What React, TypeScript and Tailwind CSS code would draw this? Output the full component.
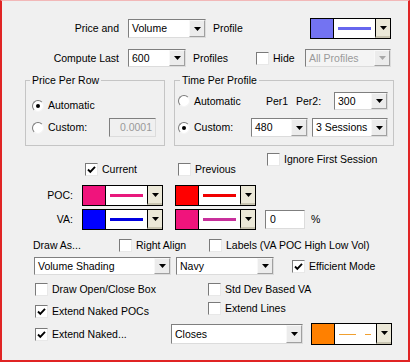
import React from 'react';
import clsx from 'clsx';

const Tri = ({ color = '#000' }: { color?: string }) => (
  <svg width="7" height="4" viewBox="0 0 7 4">
    <path d="M0 0h7L3.5 4z" fill={color} />
  </svg>
);

function Select({ value, className, disabled }: { value: string; className?: string; disabled?: boolean }) {
  return (
    <div
      className={clsx(
        'flex items-stretch border border-t-[#7f7f7f] border-l-[#7f7f7f] border-b-[#dcdcdc] border-r-[#dcdcdc]',
        disabled ? 'bg-[#f4f4f4] text-[#9a9a9a]' : 'bg-white',
        className
      )}
    >
      <span className="flex-1 flex items-center pl-[3px] whitespace-nowrap overflow-hidden">{value}</span>
      <span className="w-[16px] flex items-center justify-center bg-[#ececec] border border-[#f8f8f8] border-b-[#a0a0a0] border-r-[#a0a0a0]">
        <Tri color={disabled ? '#a8a8a8' : '#000'} />
      </span>
    </div>
  );
}

function ColorLine({ swatch, line, dashed, className }: { swatch: string; line: string; dashed?: boolean; className?: string }) {
  return (
    <div className={clsx('flex h-[21px] w-[81px] border border-black bg-white', className)}>
      <div className="w-[22px]" style={{ background: swatch }} />
      <div className="flex-1 flex items-center justify-center border-l border-black px-[4px]">
        {dashed ? (
          <div className="flex w-full gap-[9px]">
            <div className="h-[1px] w-[17px]" style={{ background: line }} />
            <div className="h-[1px] w-[6px]" style={{ background: line }} />
          </div>
        ) : (
          <div className="h-[3px] w-full" style={{ background: line }} />
        )}
      </div>
      <div className="w-[15px] flex items-center justify-center border-l border-black bg-[#ebe8d8] border-b-2 border-b-[#c9c5b2]">
        <Tri />
      </div>
    </div>
  );
}

function Check({ checked, label, className }: { checked?: boolean; label: string; className?: string }) {
  return (
    <div className={clsx('flex items-center gap-[4px] h-[13px]', className)}>
      <span className="w-[13px] h-[13px] shrink-0 bg-white border border-t-[#7a7a7a] border-l-[#7a7a7a] border-b-[#e8e8e8] border-r-[#e8e8e8] flex items-center justify-center">
        {checked && (
          <svg width="9" height="9" viewBox="0 0 9 9">
            <path d="M1 4.5l2.3 2.3L8 1.8" stroke="#000" strokeWidth="1.9" fill="none" />
          </svg>
        )}
      </span>
      <span className="whitespace-nowrap">{label}</span>
    </div>
  );
}

function Radio({ checked }: { checked?: boolean }) {
  return (
    <span className="w-[12px] h-[12px] shrink-0 rounded-full bg-white border border-t-[#7a7a7a] border-l-[#7a7a7a] border-b-[#f4f4f4] border-r-[#f4f4f4] flex items-center justify-center">
      {checked && <span className="w-[4px] h-[4px] rounded-full bg-black" />}
    </span>
  );
}

export default function App() {
  return (
    <div className="w-[412px] h-[364px] bg-white">
      <div className="w-[410px] h-[362px] bg-[#f0f0f0] border-t border-t-[#f2b8b8] border-x-2 border-b-2 border-[#e02424] text-[10.5px] text-black font-['Liberation_Sans',Arial,sans-serif] leading-none">
        {/* Price and Volume Profile */}
        <div className="flex items-center h-[21px] mt-[17px]">
          <span className="w-[117px] text-right">Price and</span>
          <Select value="Volume" className="ml-[9px] w-[78px] h-[19px]" />
          <span className="ml-[7px] w-[97px]">Profile</span>
          <ColorLine swatch="#7373f2" line="#6666ee" />
        </div>

        {/* Compute Last */}
        <div className="flex items-center h-[18px] mt-[10px]">
          <span className="w-[117px] text-right">Compute Last</span>
          <Select value="600" className="ml-[9px] w-[58px] h-[18px]" />
          <span className="ml-[7px] w-[63px]">Profiles</span>
          <Check label="" className="w-[13px]" />
          <span className="ml-[4px] w-[32px]">Hide</span>
          <Select value="All Profiles" disabled className="w-[86px] h-[18px]" />
        </div>

        {/* Groups */}
        <div className="flex mt-[7px]">
          <fieldset className="ml-[23px] w-[140px] h-[72px] border border-[#c5c5c5]">
            <legend className="ml-[4px] px-[2px] leading-[13px]">Price Per Row</legend>
            <div className="flex items-center h-[13px] mt-[12px] ml-[6px] gap-[4px]">
              <Radio checked />
              <span>Automatic</span>
            </div>
            <div className="flex items-center h-[19px] mt-[6px] ml-[6px]">
              <Radio />
              <span className="ml-[4px] w-[61px]">Custom:</span>
              <div className="w-[47px] h-[19px] flex items-center justify-end pr-[3px] text-[#9a9a9a] bg-[#f0f0f0] border border-t-[#7f7f7f] border-l-[#7f7f7f] border-b-[#dcdcdc] border-r-[#dcdcdc]">
                0.0001
              </div>
            </div>
          </fieldset>

          <fieldset className="ml-[9px] w-[220px] h-[72px] border border-[#c5c5c5]">
            <legend className="ml-[5px] px-[2px] leading-[13px]">Time Per Profile</legend>
            <div className="flex items-center h-[18px] mt-[5px] ml-[3px]">
              <Radio />
              <span className="ml-[4px] w-[72px]">Automatic</span>
              <span className="w-[30px]">Per1</span>
              <span className="w-[38px]">Per2:</span>
              <Select value="300" className="w-[54px] h-[18px]" />
            </div>
            <div className="flex items-center h-[19px] mt-[8px] ml-[3px]">
              <Radio checked />
              <span className="ml-[4px] w-[57px]">Custom:</span>
              <Select value="480" className="w-[57px] h-[19px]" />
              <Select value="3 Sessions" className="ml-[4px] w-[76px] h-[19px]" />
            </div>
          </fieldset>
        </div>

        {/* Current / Previous / Ignore */}
        <div className="flex items-start mt-[7px] ml-[83px]">
          <Check checked label="Current" className="mt-[10px] w-[93px]" />
          <Check label="Previous" className="mt-[10px] w-[89px]" />
          <Check label="Ignore First Session" />
        </div>

        {/* POC */}
        <div className="flex items-center h-[21px] mt-[9px]">
          <span className="w-[71px] text-right">POC:</span>
          <ColorLine swatch="#f0147c" line="#e8187c" className="ml-[9px]" />
          <ColorLine swatch="#ff0000" line="#f00000" className="ml-[12px]" />
        </div>

        {/* VA */}
        <div className="flex items-center h-[21px] mt-[3px]">
          <span className="w-[71px] text-right">VA:</span>
          <ColorLine swatch="#0000ff" line="#0000e0" className="ml-[9px]" />
          <ColorLine swatch="#f0147c" line="#c8309c" className="ml-[12px]" />
          <div className="ml-[9px] w-[40px] h-[19px] flex items-center pl-[4px] bg-white border border-t-[#7f7f7f] border-l-[#7f7f7f] border-b-[#dcdcdc] border-r-[#dcdcdc]">
            0
          </div>
          <span className="ml-[6px]">%</span>
        </div>

        {/* Draw As */}
        <div className="flex items-center h-[13px] mt-[9px] ml-[31px]">
          <span className="w-[86px]">Draw As...</span>
          <Check label="Right Align" className="w-[90px]" />
          <Check label="Labels (VA POC High Low Vol)" />
        </div>

        <div className="flex items-center h-[18px] mt-[5px] ml-[32px]">
          <Select value="Volume Shading" className="w-[137px] h-[18px]" />
          <Select value="Navy" className="ml-[5px] w-[98px] h-[18px]" />
          <Check checked label="Efficient Mode" className="ml-[18px]" />
        </div>

        <div className="flex items-center h-[13px] mt-[8px] ml-[33px]">
          <Check label="Draw Open/Close Box" className="w-[173px]" />
          <Check label="Std Dev Based VA" />
        </div>

        <div className="flex items-start mt-[6px] ml-[33px]">
          <Check checked label="Extend Naked POCs" className="mt-[3px] w-[173px]" />
          <Check label="Extend Lines" />
        </div>

        <div className="flex items-center h-[22px] mt-[5px] ml-[33px]">
          <Check checked label="Extend Naked..." className="w-[136px]" />
          <Select value="Closes" className="w-[132px] h-[20px]" />
          <ColorLine swatch="#ff8000" line="#f0a030" dashed className="ml-[8px] h-[22px]" />
        </div>
      </div>
    </div>
  );
}
